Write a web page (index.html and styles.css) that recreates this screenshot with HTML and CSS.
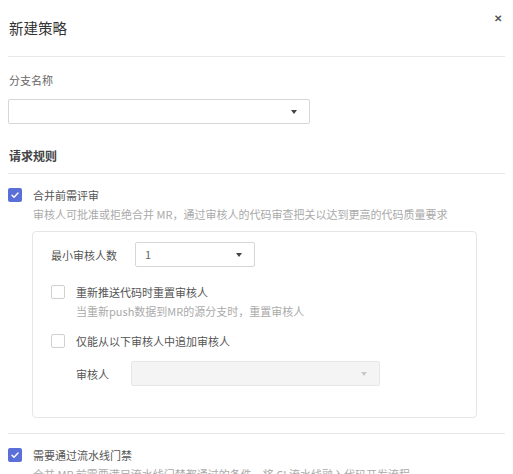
FILE: index.html
```html
<!DOCTYPE html>
<html lang="zh-CN">
<head>
	<meta charset="UTF-8">
	<title>新建策略</title>
	<link rel="stylesheet" href="styles.css">
</head>
<body>
	<div class="dialog">
		<div class="dlg-head">
			<h2 class="dlg-title">新建策略</h2>
			<span class="dlg-close">&#x2715;</span>
		</div>

		<div class="field-label">分支名称</div>
		<div class="select branch-select"><span class="caret"></span></div>

		<div class="section-title">请求规则</div>

		<div class="check-row">
			<span class="checkbox checked"><svg viewBox="0 0 14 14" width="14" height="14"><path d="M4 7.2l2 2 4-4.2" fill="none" stroke="#fff" stroke-width="1.4" stroke-linecap="round" stroke-linejoin="round"/></svg></span>
			<span class="check-text">合并前需评审</span>
		</div>
		<div class="check-desc">审核人可批准或拒绝合并 MR，通过审核人的代码审查把关以达到更高的代码质量要求</div>

		<div class="sub-box">
			<div class="form-row">
				<span class="row-label min-label">最小审核人数</span>
				<div class="select num-select"><span class="val">1</span><span class="caret"></span></div>
			</div>

			<div class="check-row sub-check first">
				<span class="checkbox"></span>
				<span class="check-text">重新推送代码时重置审核人</span>
			</div>
			<div class="check-desc">当重新push数据到MR的源分支时，重置审核人</div>

			<div class="check-row sub-check">
				<span class="checkbox"></span>
				<span class="check-text">仅能从以下审核人中追加审核人</span>
			</div>

			<div class="form-row reviewer-row">
				<span class="row-label rev-label">审核人</span>
				<div class="select disabled rev-select"><span class="caret"></span></div>
			</div>
		</div>

		<div class="check-row pipe-row">
			<span class="checkbox checked"><svg viewBox="0 0 14 14" width="14" height="14"><path d="M4 7.2l2 2 4-4.2" fill="none" stroke="#fff" stroke-width="1.4" stroke-linecap="round" stroke-linejoin="round"/></svg></span>
			<span class="check-text">需要通过流水线门禁</span>
		</div>
		<div class="check-desc">合并 MR 前需要满足流水线门禁都通过的条件，将 CI 流水线融入代码开发流程</div>
	</div>
</body>
</html>
```

FILE: styles.css
```css
body{ margin: 0; padding: 0; background: #fff; font-family: "Noto Sans CJK SC", "Noto Sans", sans-serif; color: #555; overflow: hidden; }
.dialog{ padding: 0 8px; }

.dlg-head{ height: 56px; display: flex; justify-content: space-between; align-items: flex-start; border-bottom: 1px solid #e8e8e8; }
.dlg-title{ margin: 18px 0 0 1px; font-size: 14.5px; line-height: 20px; font-weight: normal; color: #333; }
.dlg-close{ margin: 10px 3px 0 0; font-size: 10px; line-height: 16px; color: #555; font-weight: bold; }

.field-label{ margin-top: 15px; padding-left: 1px; font-size: 11px; line-height: 16px; color: #666; }

.select{ position: relative; box-sizing: border-box; height: 25px; border: 1px solid #d6d6d6; border-radius: 2px; background: #fff; font-size: 11px; line-height: 23px; color: #666; }
.select .val{ padding-left: 9px; }
.caret{ position: absolute; right: 12px; top: 10px; width: 0; height: 0; border-left: 3.5px solid transparent; border-right: 3.5px solid transparent; border-top: 4px solid #444; }
.branch-select{ margin-top: 11px; width: 302px; }

.section-title{ margin-top: 23px; padding: 0 0 8px 1px; font-size: 12px; line-height: 18px; font-weight: bold; color: #444; border-bottom: 1px solid #e8e8e8; }

.check-row{ display: flex; align-items: center; height: 16px; margin-top: 13px; }
.checkbox{ box-sizing: border-box; width: 14px; height: 14px; border: 1px solid #d0d0d0; border-radius: 2px; background: #fff; flex: none; }
.checkbox.checked{ border: none; background: #5b6fd9; }
.checkbox svg{ display: block; }
.check-text{ margin-left: 11px; font-size: 11px; line-height: 16px; color: #555; }
.check-desc{ margin-top: 2px; padding-left: 25px; font-size: 11px; line-height: 18px; color: #aaa; }

.sub-box{ margin: 8px 28px 0 24px; padding: 10px 18px 31px; border: 1px solid #e6e6e6; border-radius: 4px; }
.form-row{ display: flex; align-items: center; }
.row-label{ font-size: 11px; line-height: 16px; color: #555; }
.min-label{ width: 84px; }
.num-select{ width: 120px; }
.sub-check.first{ margin-top: 17px; }
.sub-check{ margin-top: 13px; }
.reviewer-row{ margin-top: 12px; padding-left: 25px; }
.rev-label{ width: 55px; }
.rev-select{ width: 249px; }
.select.disabled{ background: #f4f4f4; border-color: #e6e6e6; }
.select.disabled .caret{ border-top-color: #c8c8c8; }

.pipe-row{ margin-top: 15px; padding-top: 13px; border-top: 1px solid #e8e8e8; }
```
